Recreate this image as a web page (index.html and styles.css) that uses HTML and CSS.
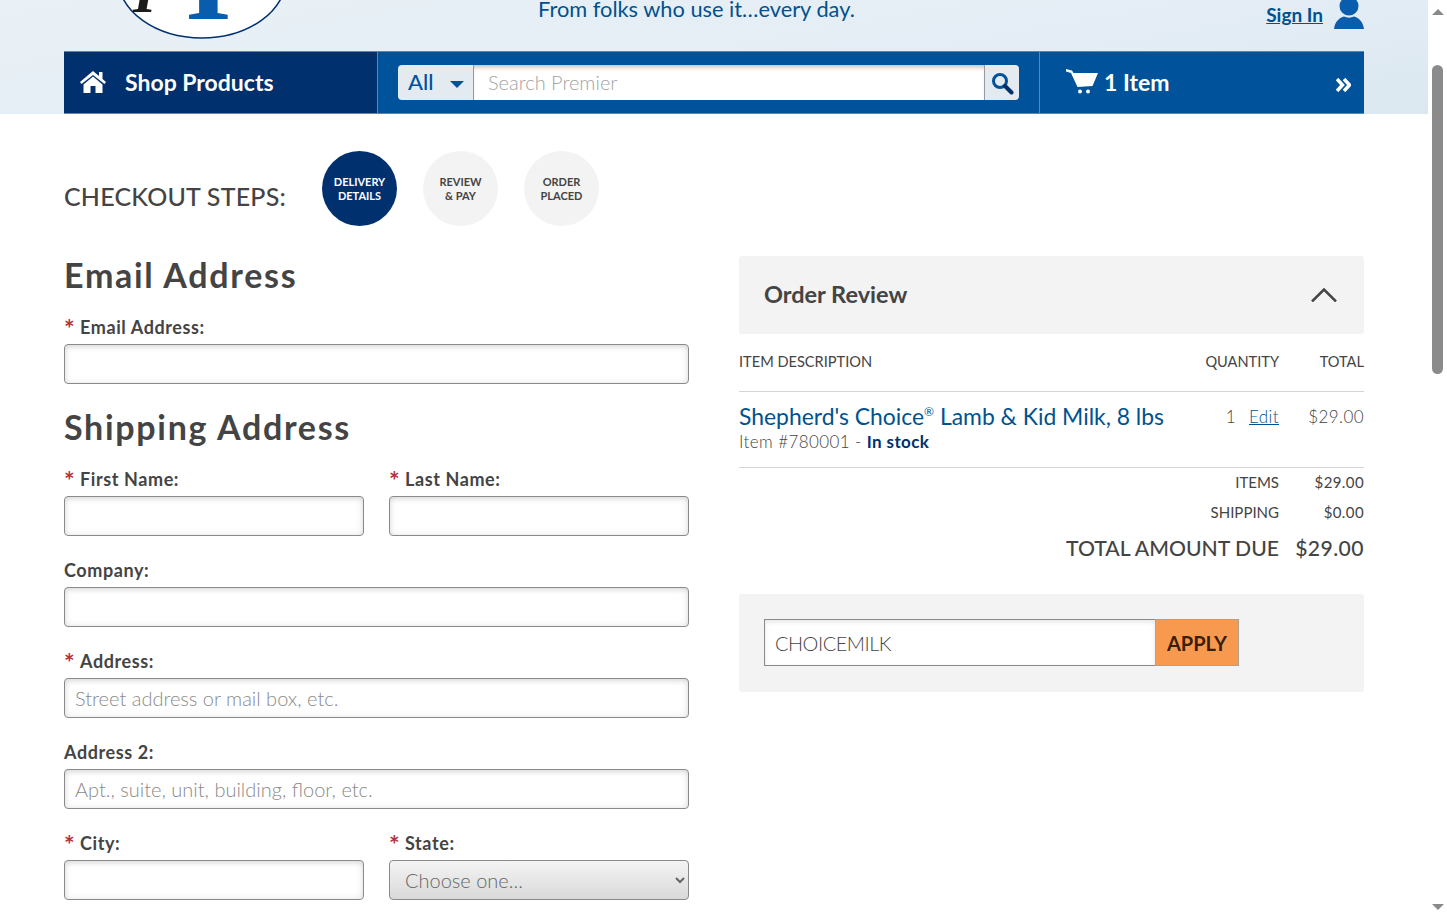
FILE: index.html
```html
<!DOCTYPE html>
<html lang="en">
<head>
    <meta charset="UTF-8">
    <title>Checkout</title>
    <link rel="stylesheet" href="styles.css">
</head>
<body>
<div class="page">
    <header class="site-header">
        <div class="top-row">
            <svg class="logo" viewBox="0 0 172 40" aria-label="Premier logo">
                <ellipse cx="85" cy="-22" rx="84" ry="60" fill="#fff" stroke="#00306e" stroke-width="1.5"/>
                <text x="16" y="12" class="logo-p">I</text>
                <text x="68" y="19" class="logo-i">I</text>
            </svg>
            <p class="tagline">From folks who use it…every day.</p>
            <a class="sign-in" href="#">Sign In</a>
            <svg class="user-icon" viewBox="0 0 30 29" aria-hidden="true">
                <circle cx="15" cy="6" r="9.5"/>
                <path d="M0 29 C1 21 6 17.5 10 16.5 C13 18 17 18 20 16.5 C24 17.5 29 21 30 29 Z"/>
            </svg>
        </div>
        <nav class="main-nav">
            <a class="shop-link" href="#">
                <svg class="home-icon" viewBox="0 0 26 22" aria-hidden="true">
                    <path d="M13 0 L19 5 V1 H22.500 V8 L26 11 L24.500 13 L13 4 L1.500 13 L0 11 Z"/>
                    <path d="M3.500 13.500 L13 5.500 L22.500 13.500 V22 H15.500 V15 H10.500 V22 H3.500 Z"/>
                </svg>
                Shop Products
            </a>
            <form class="search-wrap">
                <div class="search-cat">All <span class="caret"></span></div>
                <div class="search-input">Search Premier</div>
                <button type="button" class="search-btn" aria-label="Search">
                    <svg viewBox="0 0 24 24" width="24" height="24" aria-hidden="true">
                        <circle cx="10" cy="10" r="6.500" fill="none" stroke="#00529b" stroke-width="3"/>
                        <path d="M15 15 L21.500 21.500" stroke="#00306e" stroke-width="4" stroke-linecap="round"/>
                    </svg>
                </button>
            </form>
            <a class="cart-link" href="#">
                <svg class="cart-icon" viewBox="0 0 32 25" aria-hidden="true">
                    <path d="M0 0 L6 1.500 L7.500 4 H32 L26.500 17 L11.500 18 L5 4 L0 2.500 Z"/>
                    <circle cx="14" cy="22.500" r="2"/>
                    <circle cx="22" cy="22.500" r="2"/>
                </svg>
                <span>1 Item</span>
                <svg class="more-icon" viewBox="0 0 15 14" aria-hidden="true">
                    <path d="M1 1 L6.500 7 L1 13 M8 1 L13.500 7 L8 13" fill="none" stroke="#fff" stroke-width="3.500"/>
                </svg>
            </a>
        </nav>
    </header>

    <main class="content">
        <div class="steps">
            <h3 class="steps-label">CHECKOUT STEPS:</h3>
            <div class="step active">DELIVERY<br>DETAILS</div>
            <div class="step">REVIEW<br>&amp; PAY</div>
            <div class="step">ORDER<br>PLACED</div>
        </div>

        <div class="columns">
            <form class="address-form">
                <h2>Email Address</h2>
                <div class="form-group tight">
                    <label><span class="req">*</span>Email Address:</label>
                    <input type="text">
                </div>
                <h2>Shipping Address</h2>
                <div class="form-row">
                    <div class="form-group">
                        <label><span class="req">*</span>First Name:</label>
                        <input type="text">
                    </div>
                    <div class="form-group">
                        <label><span class="req">*</span>Last Name:</label>
                        <input type="text">
                    </div>
                </div>
                <div class="form-group">
                    <label>Company:</label>
                    <input type="text">
                </div>
                <div class="form-group">
                    <label><span class="req">*</span>Address:</label>
                    <input type="text" placeholder="Street address or mail box, etc.">
                </div>
                <div class="form-group">
                    <label>Address 2:</label>
                    <input type="text" placeholder="Apt., suite, unit, building, floor, etc.">
                </div>
                <div class="form-row">
                    <div class="form-group">
                        <label><span class="req">*</span>City:</label>
                        <input type="text">
                    </div>
                    <div class="form-group">
                        <label><span class="req">*</span>State:</label>
                        <select><option>Choose one...</option></select>
                    </div>
                </div>
            </form>

            <aside class="order">
                <div class="order-head">
                    <h3>Order Review</h3>
                    <svg viewBox="0 0 26 14" width="26" height="14" aria-hidden="true">
                        <path d="M1 13.500 L13 1.500 L25 13.500" fill="none" stroke="#444" stroke-width="2.500"/>
                    </svg>
                </div>
                <div class="order-cols">
                    <span>ITEM DESCRIPTION</span>
                    <span class="qty">QUANTITY</span>
                    <span class="price">TOTAL</span>
                </div>
                <div class="order-item">
                    <div class="item-info">
                        <a class="item-name" href="#">Shepherd's Choice<sup>®</sup> Lamb &amp; Kid Milk, 8 lbs</a>
                        <div class="item-num">Item #780001 - <strong>In stock</strong></div>
                    </div>
                    <div class="qty">1 <a class="edit" href="#">Edit</a></div>
                    <div class="price">$29.00</div>
                </div>
                <div class="sum-row">
                    <span>ITEMS</span><span class="price">$29.00</span>
                </div>
                <div class="sum-row">
                    <span>SHIPPING</span><span class="price">$0.00</span>
                </div>
                <div class="sum-row total">
                    <span>TOTAL AMOUNT DUE</span><span class="price">$29.00</span>
                </div>
                <div class="coupon">
                    <input type="text" value="CHOICEMILK">
                    <button type="button">APPLY</button>
                </div>
            </aside>
        </div>
    </main>
</div>

<div class="scrollbar" aria-hidden="true">
    <span class="arrow-up"></span>
    <span class="thumb"></span>
    <span class="arrow-down"></span>
</div>
</body>
</html>
```

FILE: styles.css
```css
:root {
    --navy: #00306e;
    --blue: #00529b;
    --text: #444;
}
html, body {
    height: 922px;
    overflow: hidden;
}
body {
    margin: 0;
    display: flex;
    font-family: Lato, "Open Sans", sans-serif;
    color: var(--text);
    background: #fff;
}
.page {
    width: 1428px;
    flex: none;
}

/* header */
.site-header {
    height: 114px;
    padding: 0 64px;
    box-sizing: border-box;
    background: linear-gradient(170deg, #e9f1f6 0%, #e4edf5 60%, #dbe8f0 100%);
}
.top-row {
    height: 51px;
    display: flex;
    align-items: flex-start;
}
.logo {
    width: 172px;
    height: 40px;
    margin-left: 53px;
    flex: none;
}
.logo-p {
    font: italic 700 60px "Liberation Serif", serif;
    fill: #1c1c1c;
}
.logo-i {
    font: 700 120px "Liberation Serif", serif;
    fill: #0a5cad;
}
.tagline {
    margin: 0 0 0 249px;
    font-size: 21.8px;
    line-height: 18px;
    padding-bottom: 2px;
    color: #00528f;
}
.sign-in {
    margin: 3px 0 0 auto;
    font-size: 19px;
    font-weight: 700;
    line-height: 23px;
    color: #00528f;
}
.user-icon {
    width: 30px;
    height: 29px;
    margin-left: 11px;
    fill: #0a5cad;
}
.main-nav {
    height: 63px;
    display: flex;
    background: var(--blue);
    border-top: 1px solid #3f8fd0;
    border-bottom: 1px solid #3f8fd0;
    box-sizing: border-box;
    color: #fff;
}
.shop-link {
    width: 314px;
    display: flex;
    align-items: center;
    padding: 0 0 2px 16px;
    box-sizing: border-box;
    background: var(--navy);
    border-right: 1px solid #3f8fd0;
    color: #fff;
    font-size: 23px;
    font-weight: 700;
    text-decoration: none;
}
.home-icon {
    width: 26px;
    height: 22px;
    margin-right: 19px;
    fill: #fff;
}
.search-wrap {
    width: 662px;
    display: flex;
    align-items: center;
    padding: 0 20px;
    box-sizing: border-box;
    border-right: 1px solid #3f8fd0;
}
.search-cat {
    width: 76px;
    height: 35px;
    display: flex;
    align-items: center;
    justify-content: space-between;
    padding: 0 9px 2px 10px;
    box-sizing: border-box;
    background: #e3ebf1;
    border-right: 1px solid #999;
    border-radius: 4px 0 0 4px;
    color: var(--blue);
    font-size: 22px;
    font-weight: 500;
}
.caret {
    border-left: 7px solid transparent;
    border-right: 7px solid transparent;
    border-top: 7px solid var(--blue);
    margin-top: 6px;
}
.search-input {
    flex: 1;
    height: 35px;
    line-height: 34px;
    padding-left: 14px;
    background: #fff;
    box-shadow: inset 0 5px 5px -3px #bbb;
    color: #a3a3a3;
    font-size: 20px;
    font-weight: 300;
}
.search-btn {
    width: 35px;
    height: 35px;
    padding: 0;
    display: flex;
    align-items: center;
    justify-content: center;
    border: none;
    border-left: 1px solid #999;
    border-radius: 0 4px 4px 0;
    background: #e3ebf1;
}
.cart-link {
    flex: 1;
    display: flex;
    align-items: center;
    padding: 0 13px 2px 26px;
    color: #fff;
    font-size: 23px;
    font-weight: 700;
    text-decoration: none;
}
.cart-icon {
    width: 32px;
    height: 25px;
    margin-right: 6px;
    fill: #fff;
}
.more-icon {
    width: 15px;
    height: 14px;
    margin: 6px 0 0 auto;
}

/* checkout steps */
.content {
    padding: 37px 64px 0;
}
.steps {
    display: flex;
    align-items: flex-start;
    gap: 26px;
}
.steps-label {
    width: 222px;
    margin: 29px 10px 0 0;
    font-size: 25px;
    line-height: 32px;
    font-weight: 500;
    letter-spacing: 0.2px;
    white-space: nowrap;
}
.step {
    width: 75px;
    height: 75px;
    display: flex;
    align-items: center;
    justify-content: center;
    text-align: center;
    border-radius: 50%;
    background: #f3f3f3;
    font-size: 11px;
    line-height: 14px;
    font-weight: 700;
}
.step.active {
    background: var(--navy);
    color: #fff;
}

/* columns */
.columns {
    display: grid;
    grid-template-columns: 625px 625px;
    gap: 50px;
    margin-top: 28px;
}
h2 {
    margin: 0 0 19px;
    font-size: 34px;
    line-height: 42px;
    font-weight: 700;
    letter-spacing: 1.7px;
}
.form-group {
    margin-bottom: 22px;
}
.form-row {
    display: grid;
    grid-template-columns: 300px 300px;
    gap: 25px;
}
label {
    display: block;
    height: 29px;
    font-size: 18px;
    line-height: 24px;
    font-weight: 700;
    letter-spacing: 0.6px;
}
.req {
    display: inline-block;
    width: 16px;
    color: #b5303c;
    font-size: 25px;
    line-height: 0;
    vertical-align: -4px;
}
input, select {
    display: block;
    width: 100%;
    height: 40px;
    box-sizing: border-box;
    font-family: inherit;
    font-size: 20px;
    font-weight: 300;
    color: var(--text);
}
.form-group input {
    padding: 0 10px;
    border: 1px solid #8a8a8a;
    border-radius: 4px;
    box-shadow: inset 0 2px 5px rgba(0, 0, 0, 0.1), inset 0 0 8px rgba(0, 0, 0, 0.08);
}
input::placeholder {
    color: #8a8a8a;
    opacity: 1;
}
select {
    padding-left: 11px;
    border: 1px solid #8a8a8a;
    border-radius: 4px;
    background: linear-gradient(#f4f4f4, #d9d9d9);
    color: #666;
}

/* order review */
.order {
    margin-top: 2px;
}
.order-head {
    height: 78px;
    display: flex;
    align-items: center;
    justify-content: space-between;
    padding: 0 27px 0 25px;
    background: #f3f3f3;
    border-radius: 3px;
}
.order-head h3 {
    margin: 0 0 3px;
    font-size: 23.5px;
    font-weight: 700;
}
.order-cols, .order-item, .sum-row {
    display: flex;
    justify-content: flex-end;
}
.order-cols {
    height: 55px;
    padding-bottom: 2px;
    align-items: center;
    font-size: 14.6px;
    border-bottom: 1px solid #d5d5d5;
}
.order-cols span:first-child, .item-info {
    margin-right: auto;
}
.qty {
    text-align: right;
}
.price {
    width: 85px;
    text-align: right;
    flex: none;
}
.order-item {
    height: 76px;
    margin-bottom: -1px;
    padding-top: 11px;
    box-sizing: border-box;
    border-bottom: 1px solid #d5d5d5;
    font-size: 17px;
    font-weight: 300;
    line-height: 25px;
}
.order-item .qty, .order-item .price {
    margin-top: 1px;
    letter-spacing: 0.4px;
}
.item-name {
    font-size: 22.9px;
    font-weight: 400;
    line-height: 27px;
    color: #00528f;
    text-decoration: none;
}
.item-name sup {
    font-size: 12px;
    line-height: 0;
}
.item-num {
    font-size: 17px;
    line-height: 22px;
    letter-spacing: 0.4px;
}
.item-num strong {
    color: var(--navy);
    font-weight: 700;
}
.edit {
    margin-left: 8px;
    color: #00528f;
}
.sum-row {
    height: 30px;
    align-items: center;
    font-size: 15px;
}
.sum-row .price {
    letter-spacing: 0.4px;
}
.sum-row.total {
    height: 42px;
    box-sizing: border-box;
    font-size: 21.2px;
    font-weight: 500;
}
.coupon {
    height: 98px;
    margin-top: 25px;
    padding: 25px;
    box-sizing: border-box;
    display: flex;
    align-items: flex-start;
    background: #f3f3f3;
    border-radius: 3px;
}
.coupon input {
    width: 391px;
    height: 47px;
    padding: 0 10px;
    border: 1px solid #8a8a8a;
    border-right: none;
    background: #fff;
    box-shadow: inset 0 2px 5px rgba(0, 0, 0, 0.1);
    letter-spacing: -0.5px;
}
.coupon button {
    width: 84px;
    height: 47px;
    border: 1px solid #b0a08f;
    background: #f79a4f;
    color: #3a1e08;
    font-family: inherit;
    font-size: 20px;
    font-weight: 700;
}

/* scrollbar drawn by hand, the page is a fixed picture */
.scrollbar {
    width: 19px;
    height: 922px;
    flex: none;
    display: flex;
    flex-direction: column;
    align-items: center;
    background: #fff;
}
.arrow-up, .arrow-down {
    border-left: 6px solid transparent;
    border-right: 6px solid transparent;
}
.arrow-up {
    margin-top: 9px;
    border-bottom: 6px solid #8a8a8a;
}
.arrow-down {
    margin-top: 530px;
    border-top: 6px solid #8a8a8a;
}
.thumb {
    width: 11px;
    height: 309px;
    margin-top: 50px;
    border-radius: 6px;
    background: #8b8b8b;
}
```
